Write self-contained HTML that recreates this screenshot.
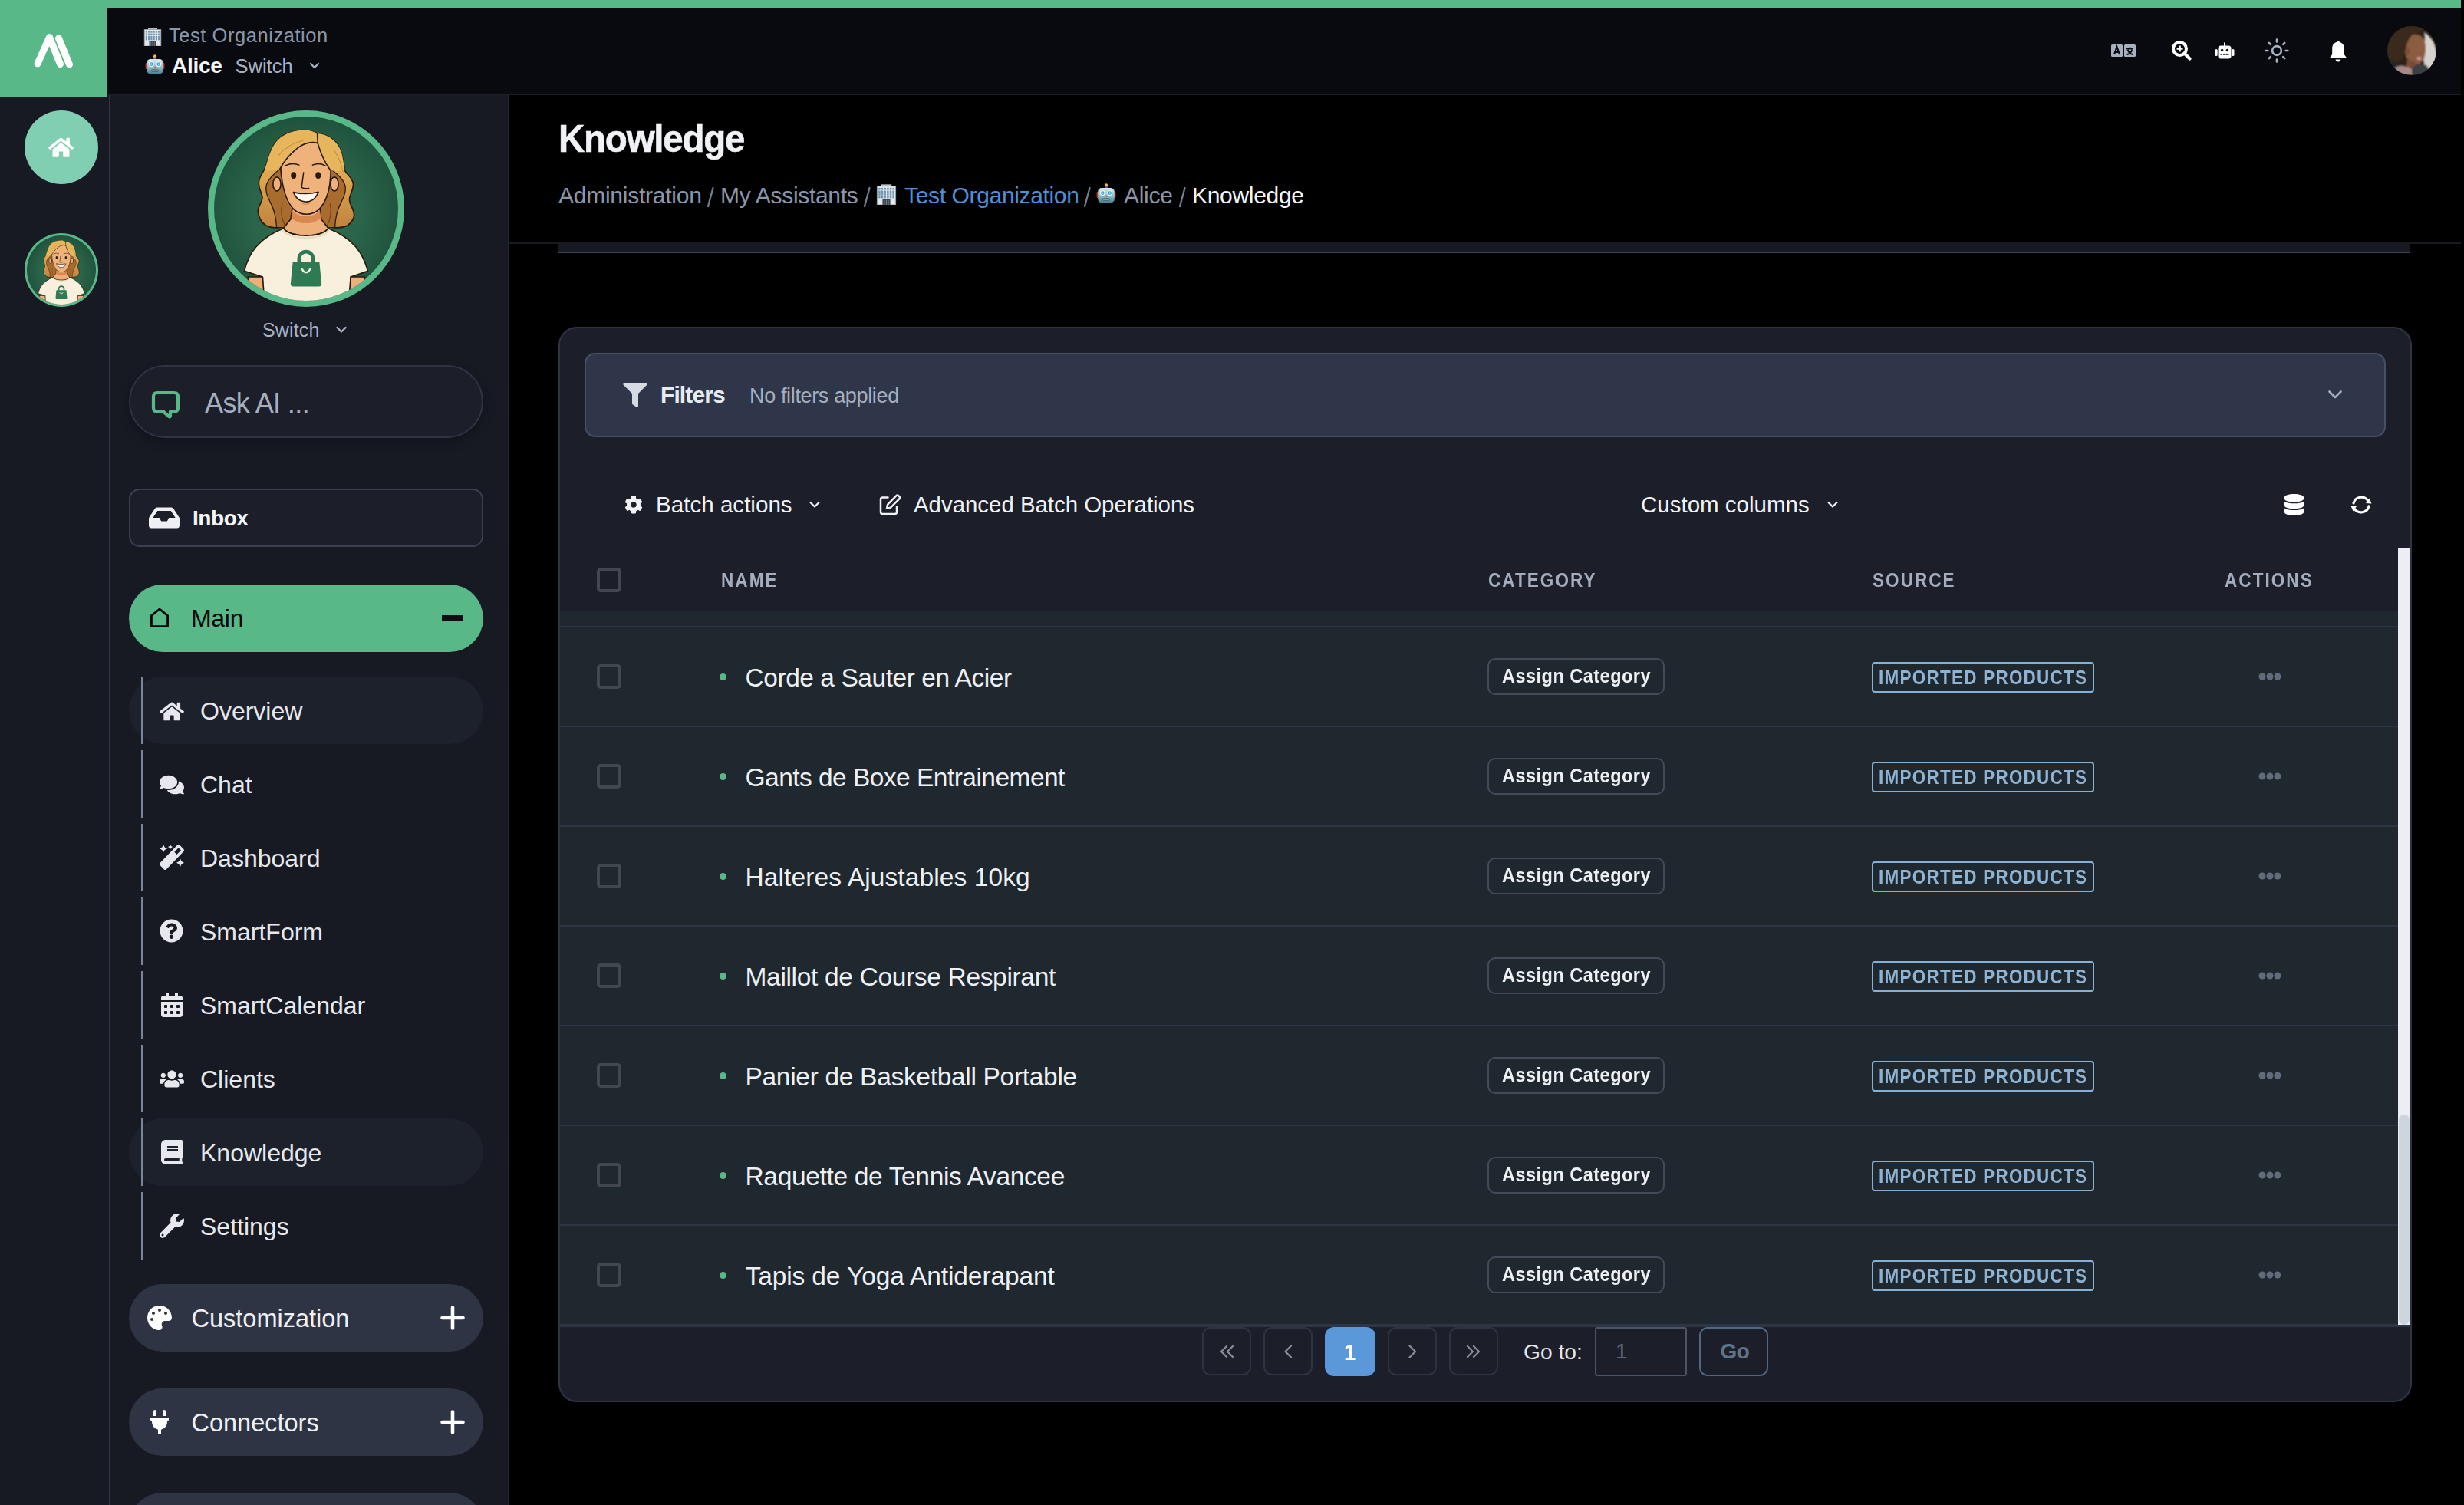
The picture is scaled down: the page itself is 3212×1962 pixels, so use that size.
<!DOCTYPE html><html><head><meta charset="utf-8"><style>
html,body{margin:0;padding:0}
body{width:3212px;height:1962px;background:#000;overflow:hidden;position:relative;font-family:"Liberation Sans",sans-serif}
.a{position:absolute;box-sizing:border-box}
.t{position:absolute;white-space:nowrap;line-height:1}
svg{display:block}
</style></head><body>
<div class="a" style="left:0px;top:0px;width:3208px;height:10px;background:#58b887;"></div>
<div class="a" style="left:0px;top:0px;width:140px;height:126px;background:#58b887;"></div>
<div class="a" style="left:140px;top:10px;width:3068px;height:112px;background:#080a0f;"></div>
<div class="a" style="left:140px;top:122px;width:3068px;height:2px;background:#1c1f27;"></div>
<svg class="a" style="left:30px;top:30px" width="80" height="70" viewBox="0 0 80 70"><g stroke="#fff" stroke-width="9" stroke-linecap="round" stroke-linejoin="round" fill="none"><path d="M19 53 L34.5 18.5 L48.5 53.5"/><path d="M46.5 20 L60.5 54"/></g></svg>
<svg width="0" height="0" style="position:absolute"><defs><symbol id="bld" viewBox="0 0 24 24"><rect x="6" y="0.3" width="12" height="2.4" fill="#b9bec4"/><rect x="1.2" y="2.4" width="21.6" height="21.6" fill="#e4e7ea"/><rect x="1.2" y="2.4" width="21.6" height="21.6" fill="none" stroke="#9aa1a8" stroke-width="0.8"/><g fill="#6f95b5"><rect x="2.80" y="4.40" width="2.2" height="2.3"/><rect x="6.05" y="4.40" width="2.2" height="2.3"/><rect x="9.30" y="4.40" width="2.2" height="2.3"/><rect x="12.55" y="4.40" width="2.2" height="2.3"/><rect x="15.80" y="4.40" width="2.2" height="2.3"/><rect x="19.05" y="4.40" width="2.2" height="2.3"/><rect x="2.80" y="7.60" width="2.2" height="2.3"/><rect x="6.05" y="7.60" width="2.2" height="2.3"/><rect x="9.30" y="7.60" width="2.2" height="2.3"/><rect x="12.55" y="7.60" width="2.2" height="2.3"/><rect x="15.80" y="7.60" width="2.2" height="2.3"/><rect x="19.05" y="7.60" width="2.2" height="2.3"/><rect x="2.80" y="10.80" width="2.2" height="2.3"/><rect x="6.05" y="10.80" width="2.2" height="2.3"/><rect x="9.30" y="10.80" width="2.2" height="2.3"/><rect x="12.55" y="10.80" width="2.2" height="2.3"/><rect x="15.80" y="10.80" width="2.2" height="2.3"/><rect x="19.05" y="10.80" width="2.2" height="2.3"/><rect x="2.80" y="14.00" width="2.2" height="2.3"/><rect x="6.05" y="14.00" width="2.2" height="2.3"/><rect x="9.30" y="14.00" width="2.2" height="2.3"/><rect x="12.55" y="14.00" width="2.2" height="2.3"/><rect x="15.80" y="14.00" width="2.2" height="2.3"/><rect x="19.05" y="14.00" width="2.2" height="2.3"/></g><rect x="7.5" y="17.6" width="9" height="6.4" fill="#3b4652"/><path d="M9.7 18.5 V24 M12 18.5 V24 M14.3 18.5 V24" stroke="#8a98a6" stroke-width="0.6"/></symbol><symbol id="rbt" viewBox="0 0 26 26"><defs><linearGradient id="rbg" x1="0" y1="0" x2="0" y2="1"><stop offset="0" stop-color="#dbe9ec"/><stop offset="0.55" stop-color="#8fbcc6"/><stop offset="1" stop-color="#3f7f8e"/></linearGradient></defs><circle cx="13" cy="2.4" r="2.1" fill="#f5c02a"/><rect x="11.2" y="3.8" width="3.6" height="2.6" rx="1" fill="#7b4fb0"/><rect x="0.6" y="11" width="3" height="8" rx="1.2" fill="#c8322a"/><rect x="22.4" y="11" width="3" height="8" rx="1.2" fill="#c8322a"/><rect x="2.2" y="6" width="21.6" height="19.5" rx="5" fill="url(#rbg)"/><circle cx="8.3" cy="12.6" r="3.4" fill="#f4fbfd"/><circle cx="17.7" cy="12.6" r="3.4" fill="#f4fbfd"/><circle cx="8.3" cy="12.6" r="2.3" fill="#2f9fd8"/><circle cx="17.7" cy="12.6" r="2.3" fill="#2f9fd8"/><circle cx="8.3" cy="12.6" r="1.1" fill="#e9f6fb"/><circle cx="17.7" cy="12.6" r="1.1" fill="#e9f6fb"/><path d="M11.4 17.6 L13 15.2 L14.6 17.6Z" fill="#e2453a"/><rect x="8.5" y="19.6" width="9" height="3" rx="1" fill="#35464d"/><path d="M10 20.2 V22 M12 20.2 V22 M14 20.2 V22 M16 20.2 V22" stroke="#e6eef0" stroke-width="1"/></symbol></defs></svg><svg class="a" style="left:187px;top:36px" width="24" height="24" viewBox="0 0 24 24"><use href="#bld" width="24" height="24"/></svg>
<div class="t" style="left:220.0px;top:34.4px;font-size:25.5px;color:#8c96a9;font-weight:400;letter-spacing:0.55px;">Test Organization</div>
<svg class="a" style="left:189px;top:71px" width="26" height="26" viewBox="0 0 26 26"><use href="#rbt" width="26" height="26"/></svg>
<div class="t" style="left:224.0px;top:72.3px;font-size:28px;color:#f4f5f7;font-weight:700;letter-spacing:-0.3px;">Alice</div>
<div class="t" style="left:306.5px;top:74.4px;font-size:25.5px;color:#a9b2c3;font-weight:400;letter-spacing:0px;">Switch</div>
<svg class="a" style="left:402px;top:80px" width="16" height="12" viewBox="0 0 16 12"><path d="M3 3 L8 8 L13 3" stroke="#a9b2c3" stroke-width="2.4" fill="none" stroke-linecap="round" stroke-linejoin="round"/></svg>
<svg class="a" style="left:2752px;top:58px" width="32" height="16" viewBox="0 0 32 16"><rect x="0" y="0" width="15" height="16" rx="1.5" fill="#a7b1c2"/><rect x="17" y="0" width="15" height="16" rx="1.5" fill="#a7b1c2"/><path d="M4 13 L7.5 3 L11 13 M5.2 9.8 H9.8" stroke="#0a0c11" stroke-width="2.2" fill="none"/><path d="M20 5.5 H29 M24.5 3.5 V6 M21.5 7 Q24 12.5 28.5 13 M27.5 7 Q25 12.5 20.5 13" stroke="#0a0c11" stroke-width="1.9" fill="none"/></svg>
<svg class="a" style="left:2830px;top:52px" width="28" height="28" viewBox="0 0 28 28"><circle cx="11.5" cy="11.5" r="8.5" stroke="#fff" stroke-width="4" fill="none"/><path d="M18 18 L24.5 24.5" stroke="#fff" stroke-width="4.2" stroke-linecap="round"/><path d="M11.5 7.5 V15.5 M7.5 11.5 H15.5" stroke="#fff" stroke-width="2.6"/></svg>
<svg class="a" style="left:2887px;top:55px" width="26" height="22" viewBox="0 0 26 22"><rect x="12" y="0.5" width="2" height="5" fill="#fff"/><rect x="4.5" y="4.5" width="17" height="17" rx="3.5" fill="#fff"/><rect x="0.5" y="9" width="3.2" height="9" rx="1.5" fill="#fff"/><rect x="22.3" y="9" width="3.2" height="9" rx="1.5" fill="#fff"/><circle cx="9.6" cy="10.5" r="1.7" fill="#0a0c11"/><circle cx="16.4" cy="10.5" r="1.7" fill="#0a0c11"/><path d="M7.5 16 H18.5" stroke="#0a0c11" stroke-width="1.5" stroke-dasharray="2.4 1.1"/></svg>
<svg class="a" style="left:2952px;top:50px" width="32" height="32" viewBox="0 0 32 32"><g transform="translate(16,16)" stroke="#a9b4c5" stroke-width="2.6" stroke-linecap="round" fill="none"><circle r="5.9"/><line x1="0" y1="-11.6" x2="0" y2="-14.4" transform="rotate(0)"/><line x1="0" y1="-11.6" x2="0" y2="-14.4" transform="rotate(45)"/><line x1="0" y1="-11.6" x2="0" y2="-14.4" transform="rotate(90)"/><line x1="0" y1="-11.6" x2="0" y2="-14.4" transform="rotate(135)"/><line x1="0" y1="-11.6" x2="0" y2="-14.4" transform="rotate(180)"/><line x1="0" y1="-11.6" x2="0" y2="-14.4" transform="rotate(225)"/><line x1="0" y1="-11.6" x2="0" y2="-14.4" transform="rotate(270)"/><line x1="0" y1="-11.6" x2="0" y2="-14.4" transform="rotate(315)"/></g></svg>
<svg class="a" style="left:3036px;top:52px" width="24" height="29" viewBox="0 0 24 29"><path d="M12 1 C13.2 1 13.7 2 13.7 2.8 C17.6 3.8 19.8 7 19.8 11 V19 L23.5 24 H0.5 L4.2 19 V11 C4.2 7 6.4 3.8 10.3 2.8 C10.3 2 10.8 1 12 1Z" fill="#fff"/><path d="M8.6 25.6 H15.4 C15.2 27.5 13.8 28.5 12 28.5 C10.2 28.5 8.8 27.5 8.6 25.6Z" fill="#fff"/></svg>
<svg class="a" style="left:3112px;top:34px" width="64" height="64" viewBox="0 0 64 64"><defs><clipPath id="pc"><circle cx="32" cy="32" r="32"/></clipPath><filter id="pb"><feGaussianBlur stdDeviation="0.9"/></filter></defs><g clip-path="url(#pc)"><rect width="64" height="64" fill="#2e2119"/><g filter="url(#pb)"><path d="M48 8 C58 14 66 26 64 44 C62 52 58 58 52 60 C48 54 47 46 47 38 C48 28 50 18 48 8 Z" fill="#d6d3cf"/><path d="M34 11 C44 9 50 16 50 28 C50 40 47 48 40 50 C32 52 26 46 24 38 C22 28 25 14 34 11 Z" fill="#8b5b3f"/><ellipse cx="26" cy="33" rx="3.5" ry="5" fill="#7e4f36"/><path d="M26 42 L38 48 L40 58 L24 58 Z" fill="#7a4c34"/><path d="M0 0 H50 C46 6 40 8 34 11 C28 14 26 22 24 30 C22 38 20 44 16 46 C8 46 2 44 0 40 Z" fill="#3a2a1e"/><ellipse cx="41.5" cy="42" rx="3" ry="2" fill="#d49a9a"/><path d="M0 44 C8 46 16 46 22 52 L14 64 H0 Z" fill="#20252a"/><path d="M10 54 C18 50 26 52 32 56 L34 64 L12 64 Z" fill="#a78a88"/><path d="M32 54 C38 50 46 48 52 52 L58 64 H32 Z" fill="#3b3f44"/></g></g></svg>
<div class="a" style="left:0px;top:126px;width:142px;height:1836px;background:#171a23;"></div>
<div class="a" style="left:140px;top:122px;width:4px;height:4px;background:#171a23;"></div>
<div class="a" style="left:142px;top:124px;width:2px;height:1838px;background:#303748;"></div>
<div class="a" style="left:144px;top:124px;width:519px;height:1838px;background:#171a23;"></div>
<div class="a" style="left:662px;top:124px;width:2px;height:1838px;background:#23262d;"></div>
<svg width="0" height="0" style="position:absolute"><defs><symbol id="av" viewBox="60 35 1400 1400"><defs><radialGradient id="avbg" cx="0.5" cy="0.52" r="0.5"><stop offset="0" stop-color="#2f6f50"/><stop offset="0.6" stop-color="#2a6449"/><stop offset="1" stop-color="#21543e"/></radialGradient><linearGradient id="hairg" x1="0" y1="0" x2="0" y2="1"><stop offset="0" stop-color="#e8b85e"/><stop offset="0.5" stop-color="#dca54e"/><stop offset="1" stop-color="#c08340"/></linearGradient><clipPath id="avclip"><circle cx="760" cy="735" r="656"/></clipPath></defs><circle cx="760" cy="735" r="700" fill="#58b887"/><circle cx="760" cy="735" r="656" fill="url(#avbg)"/><g clip-path="url(#avclip)" stroke="#2a1a0c" stroke-width="9" stroke-linejoin="round" stroke-linecap="round"><path d="M747 175 C640 178 560 220 520 300 C490 360 486 400 470 440 C440 500 420 520 423 560 C426 610 450 630 448 660 C445 700 410 720 418 760 C425 810 450 840 475 855 C505 872 540 874 570 868 L650 860 L870 860 L950 868 C990 874 1030 868 1055 855 C1085 835 1105 800 1102 776 C1098 730 1065 700 1069 667 C1072 630 1100 600 1096 558 C1090 510 1045 490 1036 460 C1025 400 1020 340 998 302 C970 250 920 205 840 199 C800 180 780 175 747 175 Z" fill="url(#hairg)"/><path d="M575 450 C530 490 480 530 475 580 C470 620 490 660 510 700 C530 740 545 790 550 866 L662 866 L662 740 C620 700 585 600 578 450 Z" fill="#a86c2f" stroke="none"/><path d="M938 455 C983 490 1033 530 1040 580 C1045 620 1025 660 1005 700 C985 740 970 790 965 866 L858 866 L858 740 C900 700 930 600 938 455 Z" fill="#a86c2f" stroke="none"/><path d="M575 450 C530 490 480 530 475 580 C470 620 490 660 510 700 C530 740 545 790 550 866 M938 455 C983 490 1033 530 1040 580 C1045 620 1025 660 1005 700 C985 740 970 790 965 866" fill="none" stroke-width="7"/><path d="M590 700 C575 760 590 820 615 866 M930 700 C945 760 930 820 905 866" fill="none" stroke="#6e4019" stroke-width="6"/><path d="M662 735 L650 810 L598 876 C650 945 870 945 919 876 L868 810 L858 735 Z" fill="#eeb07a"/><path d="M662 745 C700 805 820 805 858 745 L866 800 C820 852 700 852 654 800 Z" fill="#d9884f" stroke="none"/><path d="M320 1180 C350 1050 420 950 598 876 C650 945 870 945 919 876 C1100 950 1165 1050 1200 1180 L1078 1222 L1072 1500 L455 1500 L450 1222 Z" fill="#f8efdc"/><path d="M598 876 C650 945 870 945 919 876" fill="none" stroke="#e9dcc0" stroke-width="14" transform="translate(0,16)"/><path d="M345 1222 L450 1222 L465 1420 L355 1420 Z" fill="#eeb07a"/><path d="M1078 1222 L1180 1222 L1165 1420 L1062 1420 Z" fill="#eeb07a"/><ellipse cx="552" cy="560" rx="28" ry="50" fill="#eeb07a"/><ellipse cx="962" cy="560" rx="28" ry="50" fill="#eeb07a"/><path d="M578 440 C560 250 680 210 760 210 C860 210 955 250 936 450 C936 590 902 690 852 740 C806 786 720 786 672 740 C622 690 588 590 578 440 Z" fill="#efb27b"/><path d="M747 175 C640 178 560 220 520 300 C490 360 486 400 470 440 C455 470 500 470 573 452 C600 400 640 350 700 302 C750 266 800 256 843 268 C860 330 890 400 933 462 C965 470 1010 470 1036 460 C1025 400 1020 340 998 302 C970 250 920 205 840 199 C800 180 780 175 747 175 Z" fill="#e7b65c" stroke="none"/><path d="M573 452 C600 400 640 350 700 302 C750 266 800 256 843 268 C860 330 890 400 933 462 M843 268 L840 200" fill="none"/><path d="M560 360 C610 300 670 265 740 250 M960 320 C1000 380 1015 430 1022 470" fill="none" stroke="#c98f3d" stroke-width="6"/><path d="M612 428 Q666 404 710 424 M806 424 Q851 404 896 428 M742 478 L728 584 Q750 596 780 590" fill="none" stroke-width="8"/><path d="M670 618 Q758 640 848 616 Q818 690 756 686 Q696 684 670 618 Z" fill="#fdf8ee" stroke-width="9"/><path d="M735 700 Q758 708 780 700" fill="none" stroke="#d98a5a" stroke-width="7"/><ellipse cx="671" cy="498" rx="19" ry="24" fill="#2a1a0c" stroke="none"/><ellipse cx="846" cy="498" rx="19" ry="24" fill="#2a1a0c" stroke="none"/><path d="M710 1120 V1092 A50 50 0 0 1 810 1092 V1120" fill="none" stroke="#2e7a55" stroke-width="26"/><path d="M665 1118 H855 L870 1268 Q872 1290 850 1290 H670 Q648 1290 650 1268 Z" fill="#2e7a55" stroke="none"/><path d="M730 1165 Q760 1215 790 1165" fill="none" stroke="#f8efdc" stroke-width="14"/></g></symbol></defs></svg><div class="a" style="left:32px;top:144px;width:96px;height:96px;border-radius:50%;background:#80cfb3"></div>
<svg class="a" style="left:63px;top:178px" width="33" height="28.5" viewBox="0 0 576 512" preserveAspectRatio="none"><path fill="#fff" d="M280.37 148.26L96 300.11V464a16 16 0 0 0 16 16l112.06-.29a16 16 0 0 0 15.92-16V368a16 16 0 0 1 16-16h64a16 16 0 0 1 16 16v95.64a16 16 0 0 0 16 16.05L464 480a16 16 0 0 0 16-16V300L295.67 148.26a12.190 12.190 0 0 0-15.3 0zM571.6 251.47L488 182.56V44.05a12 12 0 0 0-12-12h-56a12 12 0 0 0-12 12v72.61L318.47 43a48 48 0 0 0-61 0L4.340 251.47a12 12 0 0 0-1.6 16.9l25.5 31A12 12 0 0 0 45.15 301l235.22-193.74a12.190 12.190 0 0 1 15.3 0L530.9 301a12 12 0 0 0 16.9-1.6l25.5-31a12 12 0 0 0-1.7-16.93z"/></svg>
<svg class="a" style="left:32px;top:304px" width="96" height="96" viewBox="0 0 96 96"><use href="#av" width="96" height="96"/></svg>
<svg class="a" style="left:271px;top:144px" width="256" height="256" viewBox="0 0 256 256"><use href="#av" width="256" height="256"/></svg>
<div class="t" style="left:342.0px;top:418.1px;font-size:25px;color:#a9b2c3;font-weight:400;letter-spacing:0.15px;">Switch</div>
<svg class="a" style="left:436px;top:424px" width="18" height="12" viewBox="0 0 18 12"><path d="M3.5 3 L9 8.5 L14.5 3" stroke="#a9b2c3" stroke-width="2.4" fill="none" stroke-linecap="round" stroke-linejoin="round"/></svg>
<div class="a" style="left:168px;top:476px;width:462px;height:95px;border-radius:48px;background:#1c1f2a;border:2px solid #2e3443;box-shadow:0 6px 14px rgba(0,0,0,0.25)"></div>
<svg class="a" style="left:196px;top:508px" width="40" height="40" viewBox="0 0 40 40"><path d="M9 4 H31 Q36 4 36 9 V23.6 Q36 28.6 31 28.6 H26 V33.5 Q26 36.5 23.8 34.6 L17 28.6 H9 Q4 28.6 4 23.6 V9 Q4 4 9 4 Z" fill="none" stroke="#58b887" stroke-width="4.2" stroke-linejoin="round"/></svg>
<div class="t" style="left:267.0px;top:508.1px;font-size:36px;color:#a6afbf;font-weight:400;letter-spacing:-0.6px;">Ask AI ...</div>
<div class="a" style="left:168px;top:637px;width:462px;height:76px;border-radius:14px;background:#1c1f2a;border:2px solid #3a404f"></div>
<svg class="a" style="left:194px;top:657px" width="40" height="36" viewBox="0 0 576 512" preserveAspectRatio="none"><path fill="#eef0f4" d="M567.938 243.908L462.25 85.374A48.003 48.003 0 0 0 422.311 64H153.689a48 48 0 0 0-39.938 21.374L8.062 243.908A47.994 47.994 0 0 0 0 270.533V400c0 26.51 21.49 48 48 48h480c26.51 0 48-21.49 48-48V270.533a47.994 47.994 0 0 0-8.062-26.625zM162.252 128h251.497l85.333 128H376l-32 64H232l-32-64H76.918l85.334-128z"/></svg>
<div class="t" style="left:251.0px;top:662.3px;font-size:28px;color:#f4f5f7;font-weight:700;letter-spacing:-0.45px;">Inbox</div>
<div class="a" style="left:168px;top:762px;width:462px;height:88px;border-radius:44px;background:#58b887"></div>
<svg class="a" style="left:194px;top:791px" width="28" height="28" viewBox="0 0 28 28"><path d="M3.4 11.6 L14 3 L24.6 11.6 V25.6 H3.4 Z" fill="none" stroke="#05070a" stroke-width="2.8" stroke-linejoin="round"/></svg>
<div class="t" style="left:249.0px;top:790.4px;font-size:32px;color:#05070a;font-weight:400;letter-spacing:-0.3px;">Main</div>
<div class="a" style="left:576px;top:802px;width:28px;height:7px;background:#0b0f14;"></div>
<div class="a" style="left:168px;top:882px;width:462px;height:88px;border-radius:44px;background:#1d212c"></div>
<div class="a" style="left:184px;top:882px;width:2px;height:88px;background:#7b859a;"></div>
<div class="t" style="left:261.0px;top:910.9px;font-size:32px;color:#e6e8ed;font-weight:400;letter-spacing:0px;">Overview</div>
<div class="a" style="left:184px;top:978px;width:2px;height:88px;background:#7b859a;"></div>
<div class="t" style="left:261.0px;top:1006.9px;font-size:32px;color:#e6e8ed;font-weight:400;letter-spacing:0px;">Chat</div>
<div class="a" style="left:184px;top:1074px;width:2px;height:88px;background:#7b859a;"></div>
<div class="t" style="left:261.0px;top:1102.9px;font-size:32px;color:#e6e8ed;font-weight:400;letter-spacing:0px;">Dashboard</div>
<div class="a" style="left:184px;top:1170px;width:2px;height:88px;background:#7b859a;"></div>
<div class="t" style="left:261.0px;top:1198.9px;font-size:32px;color:#e6e8ed;font-weight:400;letter-spacing:0px;">SmartForm</div>
<div class="a" style="left:184px;top:1266px;width:2px;height:88px;background:#7b859a;"></div>
<div class="t" style="left:261.0px;top:1294.9px;font-size:32px;color:#e6e8ed;font-weight:400;letter-spacing:0px;">SmartCalendar</div>
<div class="a" style="left:184px;top:1362px;width:2px;height:88px;background:#7b859a;"></div>
<div class="t" style="left:261.0px;top:1390.9px;font-size:32px;color:#e6e8ed;font-weight:400;letter-spacing:0px;">Clients</div>
<div class="a" style="left:168px;top:1458px;width:462px;height:88px;border-radius:44px;background:#1d212c"></div>
<div class="a" style="left:184px;top:1458px;width:2px;height:88px;background:#7b859a;"></div>
<div class="t" style="left:261.0px;top:1486.9px;font-size:32px;color:#e6e8ed;font-weight:400;letter-spacing:0px;">Knowledge</div>
<div class="a" style="left:184px;top:1554px;width:2px;height:88px;background:#7b859a;"></div>
<div class="t" style="left:261.0px;top:1582.9px;font-size:32px;color:#e6e8ed;font-weight:400;letter-spacing:0px;">Settings</div>
<svg class="a" style="left:208px;top:914px" width="32" height="27" viewBox="0 0 576 512" preserveAspectRatio="none"><path fill="#e6e8ed" d="M280.37 148.26L96 300.11V464a16 16 0 0 0 16 16l112.06-.29a16 16 0 0 0 15.92-16V368a16 16 0 0 1 16-16h64a16 16 0 0 1 16 16v95.64a16 16 0 0 0 16 16.05L464 480a16 16 0 0 0 16-16V300L295.67 148.26a12.190 12.190 0 0 0-15.3 0zM571.6 251.47L488 182.56V44.05a12 12 0 0 0-12-12h-56a12 12 0 0 0-12 12v72.61L318.47 43a48 48 0 0 0-61 0L4.340 251.47a12 12 0 0 0-1.6 16.9l25.5 31A12 12 0 0 0 45.15 301l235.22-193.74a12.190 12.190 0 0 1 15.3 0L530.9 301a12 12 0 0 0 16.9-1.6l25.5-31a12 12 0 0 0-1.7-16.93z"/></svg>
<svg class="a" style="left:208px;top:1009px" width="32" height="28" viewBox="0 0 576 512" preserveAspectRatio="none"><path fill="#e6e8ed" d="M416 192c0-88.4-93.1-160-208-160S0 103.6 0 192c0 34.3 14.1 65.9 38 92-13.4 30.2-35.5 54.2-35.8 54.5-2.2 2.3-2.8 5.7-1.5 8.7S4.8 352 8 352c36.6 0 66.9-12.3 88.7-25 32.2 15.7 70.3 25 111.3 25 114.9 0 208-71.6 208-160zm122 220c23.9-26 38-57.7 38-92 0-66.9-53.5-124.2-129.3-148.1.9 6.6 1.3 13.3 1.3 20.1 0 105.900-107.7 192-240 192-10.8 0-21.3-.8-31.7-1.900C207.8 439.6 281.8 480 368 480c41 0 79.1-9.2 111.3-25 21.8 12.7 52.1 25 88.7 25 3.2 0 6.1-1.900 7.3-4.8 1.3-2.900.7-6.3-1.5-8.7-.3-.3-22.4-24.2-35.8-54.5z"/></svg>
<svg class="a" style="left:208px;top:1101px" width="32" height="33" viewBox="0 0 512 512" preserveAspectRatio="none"><path fill="#e6e8ed" d="M224 96l16-32 32-16-32-16-16-32-16 32-32 16 32 16 16 32zM80 160l26.66-53.33L160 80l-53.34-26.67L80 0 53.34 53.33 0 80l53.34 26.67L80 160zm352 128l-26.66 53.33L352 368l53.34 26.67L432 448l26.66-53.33L512 368l-53.34-26.67L432 288zm70.62-193.77L417.77 9.38C411.53 3.12 403.34 0 395.15 0c-8.19 0-16.38 3.12-22.63 9.38L9.38 372.52c-12.5 12.5-12.5 32.76 0 45.25l84.85 84.85c6.25 6.250 14.44 9.37 22.62 9.37 8.19 0 16.38-3.12 22.63-9.37l363.14-363.15c12.5-12.48 12.5-32.75 0-45.24zM359.45 203.46l-50.91-50.91 86.6-86.6 50.91 50.91-86.6 86.6z"/></svg>
<svg class="a" style="left:208px;top:1198px" width="31" height="31" viewBox="0 0 512 512" preserveAspectRatio="none"><path fill="#e6e8ed" d="M504 256c0 136.997-111.043 248-248 248S8 392.997 8 256C8 119.083 119.043 8 256 8s248 111.083 248 248zM262.655 90c-54.497 0-89.255 22.957-116.549 63.758-3.536 5.286-2.353 12.415 2.715 16.258l34.699 26.31c5.205 3.947 12.621 3.008 16.665-2.122 17.864-22.658 30.113-35.797 57.303-35.797 20.429 0 45.698 13.148 45.698 32.958 0 14.976-12.363 22.667-32.534 33.976C247.128 238.528 216 254.941 216 296v4c0 6.627 5.373 12 12 12h56c6.627 0 12-5.373 12-12v-1.333c0-28.462 83.186-29.647 83.186-106.667 0-58.002-60.165-102-116.531-102zM256 338c-25.365 0-46 20.635-46 46 0 25.364 20.635 46 46 46s46-20.636 46-46c0-25.365-20.635-46-46-46z"/></svg>
<svg class="a" style="left:210px;top:1294px" width="28" height="32" viewBox="0 0 448 512" preserveAspectRatio="none"><path fill="#e6e8ed" d="M0 464c0 26.5 21.5 48 48 48h352c26.5 0 48-21.5 48-48V192H0v272zm320-196c0-6.6 5.4-12 12-12h40c6.6 0 12 5.4 12 12v40c0 6.6-5.4 12-12 12h-40c-6.6 0-12-5.4-12-12v-40zm0 128c0-6.6 5.4-12 12-12h40c6.6 0 12 5.4 12 12v40c0 6.6-5.4 12-12 12h-40c-6.6 0-12-5.4-12-12v-40zM192 268c0-6.6 5.4-12 12-12h40c6.6 0 12 5.4 12 12v40c0 6.6-5.4 12-12 12h-40c-6.6 0-12-5.4-12-12v-40zm0 128c0-6.6 5.4-12 12-12h40c6.6 0 12 5.4 12 12v40c0 6.6-5.4 12-12 12h-40c-6.6 0-12-5.4-12-12v-40zM64 268c0-6.6 5.4-12 12-12h40c6.6 0 12 5.4 12 12v40c0 6.6-5.4 12-12 12H76c-6.6 0-12-5.4-12-12v-40zm0 128c0-6.6 5.4-12 12-12h40c6.6 0 12 5.4 12 12v40c0 6.6-5.4 12-12 12H76c-6.6 0-12-5.4-12-12v-40zM400 64h-48V16c0-8.8-7.2-16-16-16h-32c-8.8 0-16 7.2-16 16v48H160V16c0-8.8-7.2-16-16-16h-32c-8.8 0-16 7.2-16 16v48H48C21.5 64 0 85.5 0 112v48h448v-48c0-26.5-21.5-48-48-48z"/></svg>
<svg class="a" style="left:208px;top:1394px" width="32" height="25" viewBox="0 0 640 512" preserveAspectRatio="none"><path fill="#e6e8ed" d="M96 224c35.3 0 64-28.7 64-64s-28.7-64-64-64-64 28.7-64 64 28.7 64 64 64zm448 0c35.3 0 64-28.7 64-64s-28.7-64-64-64-64 28.7-64 64 28.7 64 64 64zm32 32h-64c-17.6 0-33.5 7.1-45.1 18.6 40.3 22.1 68.9 62 75.1 109.4h66c17.7 0 32-14.3 32-32v-32c0-35.3-28.7-64-64-64zm-256 0c61.9 0 112-50.1 112-112S381.9 32 320 32 208 82.1 208 144s50.1 112 112 112zm76.8 32h-8.3c-20.8 10-43.9 16-68.5 16s-47.6-6-68.5-16h-8.3C179.6 288 128 339.6 128 403.2V432c0 26.5 21.5 48 48 48h288c26.5 0 48-21.5 48-48v-28.8c0-63.6-51.6-115.2-115.2-115.2zm-223.7-13.4C161.5 263.1 145.6 256 128 256H64c-35.3 0-64 28.7-64 64v32c0 17.7 14.3 32 32 32h65.9c6.3-47.4 34.9-87.3 75.2-109.4z"/></svg>
<svg class="a" style="left:210px;top:1486px" width="28" height="32" viewBox="0 0 448 512" preserveAspectRatio="none"><path fill="#e6e8ed" d="M448 360V24c0-13.3-10.7-24-24-24H96C43 0 0 43 0 96v320c0 53 43 96 96 96h328c13.3 0 24-10.7 24-24v-16c0-7.5-3.5-14.3-8.9-18.7-4.2-15.4-4.2-59.3 0-74.7 5.4-4.3 8.9-11.1 8.9-18.6zM128 134c0-3.3 2.7-6 6-6h212c3.3 0 6 2.7 6 6v20c0 3.3-2.7 6-6 6H134c-3.3 0-6-2.7-6-6v-20zm0 64c0-3.3 2.7-6 6-6h212c3.3 0 6 2.7 6 6v20c0 3.3-2.7 6-6 6H134c-3.3 0-6-2.7-6-6v-20zm253.4 250H96c-17.7 0-32-14.3-32-32 0-17.6 14.4-32 32-32h285.4c-1.9 17.1-1.9 46.9 0 64z"/></svg>
<svg class="a" style="left:208px;top:1582px" width="32" height="32" viewBox="0 0 512 512" preserveAspectRatio="none"><path fill="#e6e8ed" d="M507.73 109.1c-2.24-9.03-13.54-12.09-20.12-5.51l-74.36 74.36-67.88-11.31-11.31-67.88 74.36-74.36c6.62-6.62 3.43-17.9-5.66-20.16-47.38-11.74-99.55.91-136.58 37.93-39.64 39.64-50.55 97.1-34.05 147.2L18.74 402.76c-24.99 24.99-24.99 65.51 0 90.5 24.99 24.99 65.51 24.99 90.5 0l213.21-213.21c50.12 16.71 107.47 5.68 147.37-34.22 37.07-37.07 49.7-89.32 37.91-136.73zM64 472c-13.25 0-24-10.75-24-24 0-13.26 10.75-24 24-24s24 10.74 24 24c0 13.25-10.75 24-24 24z"/></svg>
<div class="a" style="left:168px;top:1674px;width:462px;height:88px;border-radius:44px;background:#2f3444"></div>
<div class="t" style="left:249.5px;top:1702.5px;font-size:32.5px;color:#eef0f4;font-weight:400;letter-spacing:0px;">Customization</div>
<svg class="a" style="left:574px;top:1702px" width="32" height="32" viewBox="0 0 32 32"><path d="M16 2.5 V29.5 M2.5 16 H29.5" stroke="#fff" stroke-width="4.6" stroke-linecap="round"/></svg>
<div class="a" style="left:168px;top:1810px;width:462px;height:88px;border-radius:44px;background:#2f3444"></div>
<div class="t" style="left:249.5px;top:1838.5px;font-size:32.5px;color:#eef0f4;font-weight:400;letter-spacing:0px;">Connectors</div>
<svg class="a" style="left:574px;top:1838px" width="32" height="32" viewBox="0 0 32 32"><path d="M16 2.5 V29.5 M2.5 16 H29.5" stroke="#fff" stroke-width="4.6" stroke-linecap="round"/></svg>
<svg class="a" style="left:192px;top:1702px" width="32" height="32" viewBox="0 0 512 512" preserveAspectRatio="none"><path fill="#fff" d="M204.3 5C104.9 24.4 24.8 104.3 5.2 203.4c-37 187 131.7 326.4 258.8 306.7 41.2-6.4 61.4-54.6 42.5-91.7-23.1-45.4 9.9-98.4 60.9-98.4h79.7c35.8 0 64.8-29.6 64.9-65.3C511.5 97.1 368.1-26.9 204.3 5zM96 320c-17.7 0-32-14.3-32-32s14.3-32 32-32 32 14.3 32 32-14.3 32-32 32zm32-128c-17.7 0-32-14.3-32-32s14.3-32 32-32 32 14.3 32 32-14.3 32-32 32zm128-64c-17.7 0-32-14.3-32-32s14.3-32 32-32 32 14.3 32 32-14.3 32-32 32zm128 64c-17.7 0-32-14.3-32-32s14.3-32 32-32 32 14.3 32 32-14.3 32-32 32z"/></svg>
<svg class="a" style="left:196px;top:1838px" width="24" height="32" viewBox="0 0 384 512" preserveAspectRatio="none"><path fill="#fff" d="M320,32a32,32,0,0,0-64,0v96h64Zm48,128H16A16,16,0,0,0,0,176v32a16,16,0,0,0,16,16H32v32A160.07,160.07,0,0,0,160,412.8V512h64V412.8A160.07,160.07,0,0,0,352,256V224h16a16,16,0,0,0,16-16V176A16,16,0,0,0,368,160ZM128,32a32,32,0,0,0-64,0v96h64Z"/></svg>
<div class="a" style="left:168px;top:1946px;width:462px;height:88px;border-radius:44px;background:#2f3444"></div>
<div class="t" style="left:728.0px;top:156.3px;font-size:50px;color:#f1f2f5;font-weight:700;letter-spacing:-1.3px;transform:scaleX(0.95);transform-origin:left;-webkit-text-stroke:0.6px #f1f2f5">Knowledge</div>
<div class="t" style="left:728.0px;top:239.6px;font-size:30px;color:#8a96ab;font-weight:400;letter-spacing:-0.25px;">Administration</div>
<svg class="a" style="left:920px;top:243px" width="12" height="28" viewBox="0 0 12 28"><path d="M9.5 2 L3 26" stroke="#737e92" stroke-width="2.3" stroke-linecap="round"/></svg>
<div class="t" style="left:939.0px;top:239.6px;font-size:30px;color:#8a96ab;font-weight:400;letter-spacing:-0.3px;">My Assistants</div>
<svg class="a" style="left:1124px;top:243px" width="12" height="28" viewBox="0 0 12 28"><path d="M9.5 2 L3 26" stroke="#737e92" stroke-width="2.3" stroke-linecap="round"/></svg>
<svg class="a" style="left:1142px;top:240px" width="27" height="27" viewBox="0 0 27 27"><use href="#bld" width="27" height="27"/></svg>
<div class="t" style="left:1179.0px;top:239.6px;font-size:30px;color:#4e8fd9;font-weight:400;letter-spacing:-0.35px;">Test Organization</div>
<svg class="a" style="left:1411px;top:243px" width="12" height="28" viewBox="0 0 12 28"><path d="M9.5 2 L3 26" stroke="#737e92" stroke-width="2.3" stroke-linecap="round"/></svg>
<svg class="a" style="left:1429px;top:239px" width="26" height="26" viewBox="0 0 26 26"><use href="#rbt" width="26" height="26"/></svg>
<div class="t" style="left:1465.0px;top:239.6px;font-size:30px;color:#8a96ab;font-weight:400;letter-spacing:-0.3px;">Alice</div>
<svg class="a" style="left:1535px;top:243px" width="12" height="28" viewBox="0 0 12 28"><path d="M9.5 2 L3 26" stroke="#737e92" stroke-width="2.3" stroke-linecap="round"/></svg>
<div class="t" style="left:1554.0px;top:239.6px;font-size:30px;color:#f3f4f6;font-weight:400;letter-spacing:-0.3px;">Knowledge</div>
<div class="a" style="left:664px;top:316px;width:2544px;height:2px;background:#18191e;"></div>
<div class="a" style="left:728px;top:318px;width:2414px;height:12px;background:#171a23;border-bottom:2px solid #3d4356"></div>
<div class="a" style="left:728px;top:426px;width:2416px;height:1402px;border-radius:24px;background:#1c1f29;border:2px solid #2d3444;overflow:hidden"></div>
<div class="a" style="left:762px;top:460px;width:2348px;height:110px;border-radius:14px;background:#30364a;border:2px solid #465063"></div>
<svg class="a" style="left:812px;top:499px" width="32" height="32" viewBox="0 0 512 512" preserveAspectRatio="none"><path fill="#d6dbe3" d="M487.976 0H24.028C2.71 0-8.047 25.866 7.058 40.971L192 225.941V432c0 7.831 3.821 15.17 10.237 19.662l80 55.98C298.02 518.69 320 507.493 320 487.98V225.941l184.947-184.97C520.021 25.896 509.338 0 487.976 0z"/></svg>
<div class="t" style="left:861.0px;top:500.4px;font-size:30px;color:#e7eaef;font-weight:700;letter-spacing:-0.9px;">Filters</div>
<div class="t" style="left:977.0px;top:502.9px;font-size:27px;color:#a5aebd;font-weight:400;letter-spacing:-0.35px;">No filters applied</div>
<svg class="a" style="left:3034px;top:508px" width="20" height="14" viewBox="0 0 20 14"><path d="M2.5 2.5 L10 10 L17.5 2.5" stroke="#a5aebd" stroke-width="2.6" fill="none" stroke-linecap="round" stroke-linejoin="round"/></svg>
<svg class="a" style="left:814px;top:646px" width="24" height="24" viewBox="0 0 512 512" preserveAspectRatio="none"><path fill="#f0f2f5" d="M487.4 315.7l-42.6-24.6c4.3-23.2 4.3-47 0-70.2l42.6-24.6c4.9-2.8 7.1-8.6 5.5-14-11.1-35.6-30-67.8-54.7-94.6-3.8-4.1-10-5.1-14.8-2.3L380.8 110c-17.9-15.4-38.5-27.3-60.8-35.1V25.8c0-5.6-3.9-10.5-9.4-11.7-36.7-8.2-74.3-7.8-109.2 0-5.5 1.2-9.4 6.1-9.4 11.7V75c-22.2 7.9-42.8 19.8-60.8 35.1L88.7 85.5c-4.9-2.8-11-1.9-14.8 2.3-24.7 26.7-43.6 58.9-54.7 94.6-1.7 5.4.6 11.2 5.5 14L67.3 221c-4.3 23.2-4.3 47 0 70.2l-42.6 24.6c-4.9 2.8-7.1 8.6-5.5 14 11.1 35.6 30 67.8 54.7 94.6 3.8 4.1 10 5.1 14.8 2.3l42.6-24.6c17.9 15.4 38.5 27.3 60.8 35.1v49.2c0 5.6 3.9 10.5 9.4 11.7 36.7 8.2 74.3 7.8 109.2 0 5.5-1.2 9.4-6.1 9.4-11.7v-49.2c22.2-7.9 42.8-19.8 60.8-35.1l42.6 24.6c4.9 2.8 11 1.9 14.8-2.3 24.7-26.7 43.6-58.9 54.7-94.6 1.5-5.5-.7-11.3-5.6-14.1zM256 336c-44.1 0-80-35.9-80-80s35.9-80 80-80 80 35.9 80 80-35.9 80-80 80z"/></svg>
<div class="t" style="left:855.0px;top:642.9px;font-size:29.6px;color:#f0f2f5;font-weight:400;letter-spacing:0px;">Batch actions</div>
<svg class="a" style="left:1053px;top:652px" width="18" height="12" viewBox="0 0 18 12"><path d="M3.5 3 L9 8.5 L14.5 3" stroke="#f0f2f5" stroke-width="2.2" fill="none" stroke-linecap="round" stroke-linejoin="round"/></svg>
<svg class="a" style="left:1145px;top:643px" width="30" height="30" viewBox="0 0 30 30"><path d="M12.5 5.5 H5.5 Q3 5.5 3 8 V24.5 Q3 27 5.5 27 H21.5 Q24 27 24 24.5 V17.5" fill="none" stroke="#f0f2f5" stroke-width="2.5" stroke-linecap="round"/><path d="M23.2 3.3 Q24.8 1.8 26.4 3.3 L27.3 4.2 Q28.8 5.8 27.3 7.4 L16 18.6 L11 19.8 L12.2 14.6 Z" fill="none" stroke="#f0f2f5" stroke-width="2.5" stroke-linejoin="round"/></svg>
<div class="t" style="left:1191.0px;top:643.1px;font-size:29.4px;color:#f0f2f5;font-weight:400;letter-spacing:0px;">Advanced Batch Operations</div>
<div class="t" style="left:2139.0px;top:643.0px;font-size:29.5px;color:#f0f2f5;font-weight:400;letter-spacing:0px;">Custom columns</div>
<svg class="a" style="left:2380px;top:652px" width="18" height="12" viewBox="0 0 18 12"><path d="M3.5 3 L9 8.5 L14.5 3" stroke="#f0f2f5" stroke-width="2.2" fill="none" stroke-linecap="round" stroke-linejoin="round"/></svg>
<svg class="a" style="left:2978px;top:644px" width="25" height="28" viewBox="0 0 448 512" preserveAspectRatio="none"><path fill="#ffffff" d="M448 73.143v45.714C448 159.143 347.667 192 224 192S0 159.143 0 118.857V73.143C0 32.857 100.333 0 224 0s224 32.857 224 73.143zM448 176v102.857C448 319.143 347.667 352 224 352S0 319.143 0 278.857V176c48.125 33.143 136.208 48.572 224 48.572S399.874 209.143 448 176zm0 160v102.857C448 479.143 347.667 512 224 512S0 479.143 0 438.857V336c48.125 33.143 136.208 48.572 224 48.572S399.874 369.143 448 336z"/></svg>
<svg class="a" style="left:3062px;top:644px" width="32" height="28" viewBox="0 0 32 28"><g fill="none" stroke="#fff" stroke-width="3.2" stroke-linecap="round"><path d="M6 12 A10.5 10.5 0 0 1 25 9"/><path d="M26 16 A10.5 10.5 0 0 1 7 19"/></g><path d="M29.5 12.5 L22 12 L26.5 5.5 Z" fill="#fff"/><path d="M2.5 15.5 L10 16 L5.5 22.5 Z" fill="#fff"/></svg>
<div class="a" style="left:730px;top:714px;width:2412px;height:2px;background:#2e3547;"></div>
<div class="a" style="left:730px;top:715px;width:2396px;height:81px;background:#1c1f2a;"></div>
<div class="a" style="left:778px;top:740px;width:32px;height:32px;border:4px solid #43474f;border-radius:5px"></div>
<div class="t" style="left:939.5px;top:743.8px;font-size:25px;color:#a3adbd;font-weight:700;letter-spacing:2.3px;transform:scaleX(0.9);transform-origin:left">NAME</div>
<div class="t" style="left:1940.0px;top:744.3px;font-size:25px;color:#a3adbd;font-weight:700;letter-spacing:2.3px;transform:scaleX(0.9);transform-origin:left">CATEGORY</div>
<div class="t" style="left:2440.5px;top:744.3px;font-size:25px;color:#a3adbd;font-weight:700;letter-spacing:2.3px;transform:scaleX(0.9);transform-origin:left">SOURCE</div>
<div class="t" style="left:2900.0px;top:744.3px;font-size:25px;color:#a3adbd;font-weight:700;letter-spacing:2.3px;transform:scaleX(0.9);transform-origin:left">ACTIONS</div>
<div class="a" style="left:730px;top:796px;width:2396px;height:930px;background:#1f282f;"></div>
<div class="a" style="left:730px;top:816px;width:2396px;height:2px;background:#2d3544;"></div>
<div class="a" style="left:730px;top:946px;width:2396px;height:2px;background:#2d3544;"></div>
<div class="a" style="left:778px;top:866px;width:32px;height:32px;border:4px solid #43474f;border-radius:5px"></div>
<div class="a" style="left:938px;top:878px;width:9px;height:9px;border-radius:50%;background:#58b887"></div>
<div class="t" style="left:971.5px;top:866.6px;font-size:33.5px;color:#eef0f4;font-weight:400;letter-spacing:-0.45px;">Corde a Sauter en Acier</div>
<div class="a" style="left:1939px;top:858px;width:231px;height:48px;border:2px solid #444b58;border-radius:10px"></div>
<div class="t" style="left:1957.5px;top:869.4px;font-size:25.5px;color:#eef0f4;font-weight:700;letter-spacing:0.55px;transform:scaleX(0.92);transform-origin:left">Assign Category</div>
<div class="a" style="left:2440px;top:863px;width:290px;height:40px;border:2px solid #86b1d6;border-radius:4px"></div>
<div class="t" style="left:2448.5px;top:871.4px;font-size:25.5px;color:#8fb3d3;font-weight:700;letter-spacing:1.45px;transform:scaleX(0.88);transform-origin:left">IMPORTED PRODUCTS</div>
<svg class="a" style="left:2944px;top:876px" width="30" height="12" viewBox="0 0 30 12"><circle cx="5" cy="6" r="4.5" fill="#626b7c"/><circle cx="15" cy="6" r="4.5" fill="#626b7c"/><circle cx="25" cy="6" r="4.5" fill="#626b7c"/></svg>
<div class="a" style="left:730px;top:1076px;width:2396px;height:2px;background:#2d3544;"></div>
<div class="a" style="left:778px;top:996px;width:32px;height:32px;border:4px solid #43474f;border-radius:5px"></div>
<div class="a" style="left:938px;top:1008px;width:9px;height:9px;border-radius:50%;background:#58b887"></div>
<div class="t" style="left:971.5px;top:996.6px;font-size:33.5px;color:#eef0f4;font-weight:400;letter-spacing:-0.53px;">Gants de Boxe Entrainement</div>
<div class="a" style="left:1939px;top:988px;width:231px;height:48px;border:2px solid #444b58;border-radius:10px"></div>
<div class="t" style="left:1957.5px;top:999.4px;font-size:25.5px;color:#eef0f4;font-weight:700;letter-spacing:0.55px;transform:scaleX(0.92);transform-origin:left">Assign Category</div>
<div class="a" style="left:2440px;top:993px;width:290px;height:40px;border:2px solid #86b1d6;border-radius:4px"></div>
<div class="t" style="left:2448.5px;top:1001.4px;font-size:25.5px;color:#8fb3d3;font-weight:700;letter-spacing:1.45px;transform:scaleX(0.88);transform-origin:left">IMPORTED PRODUCTS</div>
<svg class="a" style="left:2944px;top:1006px" width="30" height="12" viewBox="0 0 30 12"><circle cx="5" cy="6" r="4.5" fill="#626b7c"/><circle cx="15" cy="6" r="4.5" fill="#626b7c"/><circle cx="25" cy="6" r="4.5" fill="#626b7c"/></svg>
<div class="a" style="left:730px;top:1206px;width:2396px;height:2px;background:#2d3544;"></div>
<div class="a" style="left:778px;top:1126px;width:32px;height:32px;border:4px solid #43474f;border-radius:5px"></div>
<div class="a" style="left:938px;top:1138px;width:9px;height:9px;border-radius:50%;background:#58b887"></div>
<div class="t" style="left:971.5px;top:1126.6px;font-size:33.5px;color:#eef0f4;font-weight:400;letter-spacing:0.11px;">Halteres Ajustables 10kg</div>
<div class="a" style="left:1939px;top:1118px;width:231px;height:48px;border:2px solid #444b58;border-radius:10px"></div>
<div class="t" style="left:1957.5px;top:1129.4px;font-size:25.5px;color:#eef0f4;font-weight:700;letter-spacing:0.55px;transform:scaleX(0.92);transform-origin:left">Assign Category</div>
<div class="a" style="left:2440px;top:1123px;width:290px;height:40px;border:2px solid #86b1d6;border-radius:4px"></div>
<div class="t" style="left:2448.5px;top:1131.4px;font-size:25.5px;color:#8fb3d3;font-weight:700;letter-spacing:1.45px;transform:scaleX(0.88);transform-origin:left">IMPORTED PRODUCTS</div>
<svg class="a" style="left:2944px;top:1136px" width="30" height="12" viewBox="0 0 30 12"><circle cx="5" cy="6" r="4.5" fill="#626b7c"/><circle cx="15" cy="6" r="4.5" fill="#626b7c"/><circle cx="25" cy="6" r="4.5" fill="#626b7c"/></svg>
<div class="a" style="left:730px;top:1336px;width:2396px;height:2px;background:#2d3544;"></div>
<div class="a" style="left:778px;top:1256px;width:32px;height:32px;border:4px solid #43474f;border-radius:5px"></div>
<div class="a" style="left:938px;top:1268px;width:9px;height:9px;border-radius:50%;background:#58b887"></div>
<div class="t" style="left:971.5px;top:1256.6px;font-size:33.5px;color:#eef0f4;font-weight:400;letter-spacing:-0.33px;">Maillot de Course Respirant</div>
<div class="a" style="left:1939px;top:1248px;width:231px;height:48px;border:2px solid #444b58;border-radius:10px"></div>
<div class="t" style="left:1957.5px;top:1259.4px;font-size:25.5px;color:#eef0f4;font-weight:700;letter-spacing:0.55px;transform:scaleX(0.92);transform-origin:left">Assign Category</div>
<div class="a" style="left:2440px;top:1253px;width:290px;height:40px;border:2px solid #86b1d6;border-radius:4px"></div>
<div class="t" style="left:2448.5px;top:1261.4px;font-size:25.5px;color:#8fb3d3;font-weight:700;letter-spacing:1.45px;transform:scaleX(0.88);transform-origin:left">IMPORTED PRODUCTS</div>
<svg class="a" style="left:2944px;top:1266px" width="30" height="12" viewBox="0 0 30 12"><circle cx="5" cy="6" r="4.5" fill="#626b7c"/><circle cx="15" cy="6" r="4.5" fill="#626b7c"/><circle cx="25" cy="6" r="4.5" fill="#626b7c"/></svg>
<div class="a" style="left:730px;top:1466px;width:2396px;height:2px;background:#2d3544;"></div>
<div class="a" style="left:778px;top:1386px;width:32px;height:32px;border:4px solid #43474f;border-radius:5px"></div>
<div class="a" style="left:938px;top:1398px;width:9px;height:9px;border-radius:50%;background:#58b887"></div>
<div class="t" style="left:971.5px;top:1386.6px;font-size:33.5px;color:#eef0f4;font-weight:400;letter-spacing:-0.31px;">Panier de Basketball Portable</div>
<div class="a" style="left:1939px;top:1378px;width:231px;height:48px;border:2px solid #444b58;border-radius:10px"></div>
<div class="t" style="left:1957.5px;top:1389.4px;font-size:25.5px;color:#eef0f4;font-weight:700;letter-spacing:0.55px;transform:scaleX(0.92);transform-origin:left">Assign Category</div>
<div class="a" style="left:2440px;top:1383px;width:290px;height:40px;border:2px solid #86b1d6;border-radius:4px"></div>
<div class="t" style="left:2448.5px;top:1391.4px;font-size:25.5px;color:#8fb3d3;font-weight:700;letter-spacing:1.45px;transform:scaleX(0.88);transform-origin:left">IMPORTED PRODUCTS</div>
<svg class="a" style="left:2944px;top:1396px" width="30" height="12" viewBox="0 0 30 12"><circle cx="5" cy="6" r="4.5" fill="#626b7c"/><circle cx="15" cy="6" r="4.5" fill="#626b7c"/><circle cx="25" cy="6" r="4.5" fill="#626b7c"/></svg>
<div class="a" style="left:730px;top:1596px;width:2396px;height:2px;background:#2d3544;"></div>
<div class="a" style="left:778px;top:1516px;width:32px;height:32px;border:4px solid #43474f;border-radius:5px"></div>
<div class="a" style="left:938px;top:1528px;width:9px;height:9px;border-radius:50%;background:#58b887"></div>
<div class="t" style="left:971.5px;top:1516.6px;font-size:33.5px;color:#eef0f4;font-weight:400;letter-spacing:-0.34px;">Raquette de Tennis Avancee</div>
<div class="a" style="left:1939px;top:1508px;width:231px;height:48px;border:2px solid #444b58;border-radius:10px"></div>
<div class="t" style="left:1957.5px;top:1519.4px;font-size:25.5px;color:#eef0f4;font-weight:700;letter-spacing:0.55px;transform:scaleX(0.92);transform-origin:left">Assign Category</div>
<div class="a" style="left:2440px;top:1513px;width:290px;height:40px;border:2px solid #86b1d6;border-radius:4px"></div>
<div class="t" style="left:2448.5px;top:1521.4px;font-size:25.5px;color:#8fb3d3;font-weight:700;letter-spacing:1.45px;transform:scaleX(0.88);transform-origin:left">IMPORTED PRODUCTS</div>
<svg class="a" style="left:2944px;top:1526px" width="30" height="12" viewBox="0 0 30 12"><circle cx="5" cy="6" r="4.5" fill="#626b7c"/><circle cx="15" cy="6" r="4.5" fill="#626b7c"/><circle cx="25" cy="6" r="4.5" fill="#626b7c"/></svg>
<div class="a" style="left:778px;top:1646px;width:32px;height:32px;border:4px solid #43474f;border-radius:5px"></div>
<div class="a" style="left:938px;top:1658px;width:9px;height:9px;border-radius:50%;background:#58b887"></div>
<div class="t" style="left:971.5px;top:1646.6px;font-size:33.5px;color:#eef0f4;font-weight:400;letter-spacing:-0.11px;">Tapis de Yoga Antiderapant</div>
<div class="a" style="left:1939px;top:1638px;width:231px;height:48px;border:2px solid #444b58;border-radius:10px"></div>
<div class="t" style="left:1957.5px;top:1649.4px;font-size:25.5px;color:#eef0f4;font-weight:700;letter-spacing:0.55px;transform:scaleX(0.92);transform-origin:left">Assign Category</div>
<div class="a" style="left:2440px;top:1643px;width:290px;height:40px;border:2px solid #86b1d6;border-radius:4px"></div>
<div class="t" style="left:2448.5px;top:1651.4px;font-size:25.5px;color:#8fb3d3;font-weight:700;letter-spacing:1.45px;transform:scaleX(0.88);transform-origin:left">IMPORTED PRODUCTS</div>
<svg class="a" style="left:2944px;top:1656px" width="30" height="12" viewBox="0 0 30 12"><circle cx="5" cy="6" r="4.5" fill="#626b7c"/><circle cx="15" cy="6" r="4.5" fill="#626b7c"/><circle cx="25" cy="6" r="4.5" fill="#626b7c"/></svg>
<div class="a" style="left:730px;top:1726px;width:2412px;height:4px;background:#2e3547;"></div>
<div class="a" style="left:3126px;top:715px;width:16px;height:1012px;background:#eceef3;"></div>
<div class="a" style="left:3127px;top:1453px;width:14px;height:274px;border-radius:7px;background:#cfd5df"></div>
<div class="a" style="left:1567px;top:1730px;width:64px;height:63px;border-radius:11px;border:2px solid #2d3340;background:#1c1f2a"></div>
<div class="a" style="left:1647px;top:1730px;width:64px;height:63px;border-radius:11px;border:2px solid #2d3340;background:#1c1f2a"></div>
<div class="a" style="left:1727px;top:1730px;width:66px;height:64px;border-radius:12px;background:#5b98da"></div>
<div class="a" style="left:1809px;top:1730px;width:64px;height:63px;border-radius:11px;border:2px solid #2d3340;background:#1c1f2a"></div>
<div class="a" style="left:1889px;top:1730px;width:64px;height:63px;border-radius:11px;border:2px solid #2d3340;background:#1c1f2a"></div>
<svg class="a" style="left:1583px;top:1751px" width="32" height="22" viewBox="0 0 32 22"><path d="M16 4 L9 11 L16 18 M24 4 L17 11 L24 18" stroke="#878a95" stroke-width="2.4" fill="none" stroke-linecap="round" stroke-linejoin="round"/></svg>
<svg class="a" style="left:1663px;top:1751px" width="32" height="22" viewBox="0 0 32 22"><path d="M20 3.5 L12.5 11 L20 18.5" stroke="#878a95" stroke-width="2.4" fill="none" stroke-linecap="round" stroke-linejoin="round"/></svg>
<div class="t" style="left:1752.0px;top:1747.6px;font-size:30px;color:#ffffff;font-weight:700;letter-spacing:0px;transform:scaleX(0.92);transform-origin:left">1</div>
<svg class="a" style="left:1825px;top:1751px" width="32" height="22" viewBox="0 0 32 22"><path d="M12.5 3.5 L20 11 L12.5 18.5" stroke="#878a95" stroke-width="2.4" fill="none" stroke-linecap="round" stroke-linejoin="round"/></svg>
<svg class="a" style="left:1905px;top:1751px" width="32" height="22" viewBox="0 0 32 22"><path d="M8 4 L15 11 L8 18 M16 4 L23 11 L16 18" stroke="#878a95" stroke-width="2.4" fill="none" stroke-linecap="round" stroke-linejoin="round"/></svg>
<div class="t" style="left:1986.0px;top:1747.8px;font-size:28.2px;color:#e3e6eb;font-weight:400;letter-spacing:0px;">Go to:</div>
<div class="a" style="left:2079px;top:1730px;width:120px;height:64px;border:2px solid #4a5464;border-radius:3px;background:#1c1f2a"></div>
<div class="t" style="left:2106.0px;top:1748.3px;font-size:28px;color:#5d6676;font-weight:400;letter-spacing:0px;">1</div>
<div class="a" style="left:2215px;top:1730px;width:90px;height:64px;border:2px solid #4e6783;border-radius:11px"></div>
<div class="t" style="left:2242.5px;top:1748.3px;font-size:28px;color:#5f7389;font-weight:700;letter-spacing:-0.5px;">Go</div>
</body></html>
